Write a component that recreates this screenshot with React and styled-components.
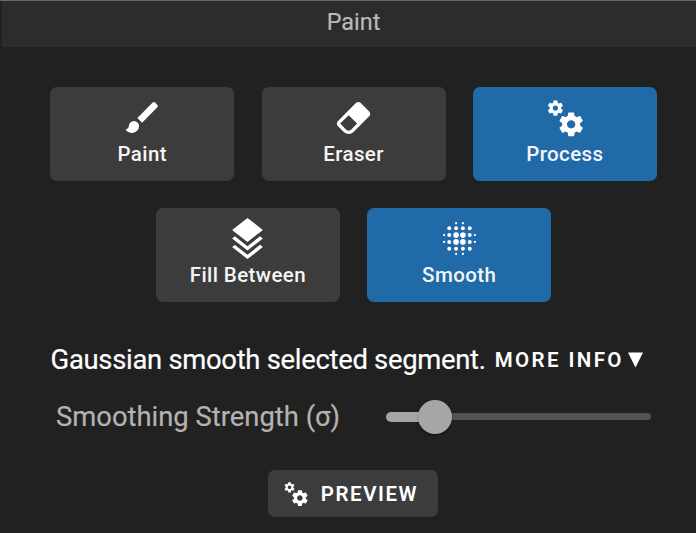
import React from "react";
import styled, { createGlobalStyle } from "styled-components";

const GlobalStyle = createGlobalStyle`
  * { box-sizing: border-box; }
  body { margin: 0; background: #212121; overflow: hidden; }
`;

const Panel = styled.main`
  width: 696px;
  height: 533px;
  background: #212121;
  color: #fff;
  font-family: Roboto, "Liberation Sans", sans-serif;
  border-top: 1px solid #646867;
  display: flex;
  flex-direction: column;
`;

const Header = styled.header`
  height: 46px;
  flex: none;
  margin-left: 2px;
  padding-bottom: 5px;
  background: #2c2c2c;
  color: #b9b9b9;
  font-size: 23.4px;
  -webkit-text-stroke: 0.2px currentColor;
  display: flex;
  align-items: center;
  justify-content: center;
  padding-left: 9px;
`;

const Tools = styled.div`
  display: flex;
  flex-wrap: wrap;
  justify-content: center;
  gap: 27px 27.3px;
  margin: 40.4px 39px 0 50.1px;
`;

const ToolButton = styled.button`
  width: 184px;
  height: 94px;
  flex: none;
  border: 0;
  border-radius: 7px;
  padding: 9.6px 0 0;
  background: ${(p) => (p.$active ? "#216aa8" : "#3c3c3c")};
  color: ${(p) => (p.$active ? "#f3f7fa" : "#f5f5f5")};
  font: 500 20.5px/30px Roboto, "Liberation Sans", sans-serif;
  letter-spacing: 0.4px;
  display: flex;
  flex-direction: column;
  align-items: center;
  gap: 1.4px;
  white-space: nowrap;
`;

const Icon = styled.svg`
  width: ${(p) => p.$size}px;
  height: ${(p) => p.$size}px;
  fill: #fff;
  flex: none;
  display: block;
`;

const Description = styled.div`
  display: flex;
  align-items: center;
  height: 40px;
  margin: 37.2px 0 0 50.5px;
  font-size: 27.4px;
  letter-spacing: -0.28px;
  -webkit-text-stroke: 0.2px currentColor;
  white-space: nowrap;
`;

const MoreInfo = styled.button`
  border: 0;
  padding: 0;
  margin-left: 9px;
  background: none;
  color: #fff;
  font: 600 20.5px/30px Roboto, "Liberation Sans", sans-serif;
  letter-spacing: 2.4px;
  -webkit-text-stroke: 0;
  display: flex;
  align-items: center;
  gap: 4.5px;
`;

const Caret = styled.svg`
  width: 15px;
  height: 16px;
  fill: #fff;
`;

const Strength = styled.label`
  display: flex;
  align-items: center;
  height: 40px;
  margin: 17px 45px 0 56px;
  color: #b3b3b3;
  font-size: 27.4px;
  -webkit-text-stroke: 0.2px currentColor;
  justify-content: space-between;
  white-space: nowrap;
`;

const StrengthText = styled.span`
  padding-top: 1px;
`;

const Slider = styled.div`
  width: 265px;
  height: 34px;
  display: flex;
  align-items: center;
`;

const Filled = styled.div`
  width: 38px;
  height: 10px;
  border-radius: 5px 0 0 5px;
  background: #a6a6a6;
  margin-right: -6px;
`;

const Thumb = styled.div`
  width: 34px;
  height: 34px;
  border-radius: 50%;
  background: #a6a6a6;
  box-shadow: 0 2px 3px rgba(0, 0, 0, 0.3);
  z-index: 1;
`;

const Rest = styled.div`
  flex: 1;
  height: 7px;
  margin-left: -4px;
  border-radius: 0 3.5px 3.5px 0;
  background: #525252;
`;

const Preview = styled.button`
  align-self: center;
  width: 170.6px;
  height: 47px;
  margin: 33.8px 0 0 9.8px;
  border: 0;
  border-radius: 7px;
  padding: 0 0 0 14.6px;
  background: #3c3c3c;
  color: #fff;
  font: 600 20.5px/30px Roboto, "Liberation Sans", sans-serif;
  letter-spacing: 1.55px;
  display: flex;
  align-items: center;
  gap: 11.6px;
`;

const COGS =
  "M15.9,18.45C17.25,18.45 18.35,17.35 18.35,16C18.35,14.65 17.25,13.55 15.9,13.55C14.54,13.55 13.45,14.65 13.45,16C13.45,17.35 14.54,18.45 15.9,18.45M21.1,16.68L22.58,17.84C22.71,17.95 22.75,18.13 22.66,18.29L21.26,20.71C21.17,20.86 21,20.92 20.83,20.86L19.09,20.16C18.73,20.44 18.33,20.67 17.91,20.85L17.64,22.7C17.62,22.87 17.47,23 17.3,23H14.5C14.32,23 14.18,22.87 14.15,22.7L13.89,20.85C13.46,20.67 13.07,20.44 12.71,20.16L10.96,20.86C10.81,20.92 10.62,20.86 10.54,20.71L9.14,18.29C9.05,18.13 9.09,17.95 9.22,17.84L10.7,16.68L10.65,16L10.7,15.31L9.22,14.16C9.09,14.05 9.05,13.86 9.14,13.71L10.54,11.29C10.62,11.13 10.81,11.07 10.96,11.13L12.71,11.84C13.07,11.56 13.46,11.32 13.89,11.15L14.15,9.29C14.18,9.13 14.32,9 14.5,9H17.3C17.47,9 17.62,9.13 17.64,9.29L17.91,11.15C18.33,11.32 18.73,11.56 19.09,11.84L20.83,11.13C21,11.07 21.17,11.13 21.26,11.29L22.66,13.71C22.75,13.86 22.71,14.05 22.58,14.16L21.1,15.31L21.15,16L21.1,16.68M6.69,8.07C7.56,8.07 8.26,7.37 8.26,6.5C8.26,5.63 7.56,4.92 6.69,4.92A1.58,1.58 0 0,0 5.11,6.5C5.11,7.37 5.82,8.07 6.69,8.07M10.03,6.94L11,7.68C11.07,7.75 11.09,7.87 11.03,7.97L10.13,9.53C10.08,9.63 9.96,9.67 9.86,9.63L8.74,9.18L8,9.62L7.81,10.81C7.79,10.92 7.7,11 7.59,11H5.79C5.67,11 5.58,10.92 5.56,10.81L5.4,9.62L4.64,9.18L3.52,9.63C3.41,9.67 3.3,9.63 3.24,9.53L2.34,7.97C2.28,7.87 2.31,7.75 2.39,7.68L3.34,6.94L3.31,6.5L3.34,6.06L2.39,5.32C2.31,5.25 2.28,5.13 2.34,5.03L3.24,3.47C3.3,3.37 3.41,3.33 3.52,3.37L4.63,3.82L5.4,3.38L5.56,2.19C5.58,2.08 5.67,2 5.79,2H7.59C7.7,2 7.79,2.08 7.81,2.19L8,3.38L8.74,3.82L9.86,3.37C9.96,3.33 10.08,3.37 10.13,3.47L11.03,5.03C11.09,5.13 11.07,5.25 11,5.32L10.03,6.06L10.06,6.5L10.03,6.94Z";
const BRUSH =
  "M20.71,4.63L19.37,3.29C19,2.9 18.35,2.9 17.96,3.29L9,12.25L11.75,15L20.71,6.04C21.1,5.65 21.1,5 20.71,4.63M7,14A3,3 0 0,0 4,17C4,18.31 2.84,19 2,19C2.92,20.22 4.5,21 6,21A4,4 0 0,0 10,17A3,3 0 0,0 7,14Z";
const ERASER =
  "M16.24,3.56L21.19,8.5C21.97,9.29 21.97,10.55 21.19,11.34L12,20.53C10.44,22.09 7.91,22.09 6.34,20.53L2.81,17C2.03,16.21 2.03,14.95 2.81,14.16L13.41,3.56C14.2,2.78 15.46,2.78 16.24,3.56M4.22,15.58L7.76,19.11C8.54,19.9 9.8,19.9 10.59,19.11L14.12,15.58L9.17,10.63L4.22,15.58Z";
const LAYERS =
  "M12 0L3 7L4.63 8.27L12 14L19.36 8.27L21 7L12 0M19.37 10.73L12 16.47L4.62 10.74L3 12L12 19L21 12L19.37 10.73M19.37 15.73L12 21.47L4.62 15.74L3 17L12 24L21 17L19.37 15.73Z";

const BLUR_DOTS = [
  [10, 3, 0.5], [14, 3, 0.5],
  [6, 6, 1], [10, 6, 1], [14, 6, 1], [18, 6, 1],
  [3, 10, 0.5], [6, 10, 1], [10, 10, 1.5], [14, 10, 1.5], [18, 10, 1], [21, 10, 0.5],
  [3, 14, 0.5], [6, 14, 1], [10, 14, 1.5], [14, 14, 1.5], [18, 14, 1], [21, 14, 0.5],
  [6, 18, 1], [10, 18, 1], [14, 18, 1], [18, 18, 1],
  [10, 21, 0.5], [14, 21, 0.5],
];

function Glyph({ path, size = 41 }) {
  return (
    <Icon $size={size} viewBox="0 0 24 24" aria-hidden="true">
      {path ? (
        <path d={path} />
      ) : (
        BLUR_DOTS.map(([x, y, r]) => (
          <circle key={`${x}-${y}`} cx={x} cy={y} r={r + 0.15} />
        ))
      )}
    </Icon>
  );
}

const TOOLS = [
  { label: "Paint", path: BRUSH },
  { label: "Eraser", path: ERASER },
  { label: "Process", path: COGS, active: true },
  { label: "Fill Between", path: LAYERS },
  { label: "Smooth", active: true },
];

export default function App() {
  return (
    <>
      <GlobalStyle />
      <Panel>
        <Header>Paint</Header>
        <Tools>
          {TOOLS.map((t) => (
            <ToolButton key={t.label} $active={t.active}>
              <Glyph path={t.path} />
              <span>{t.label}</span>
            </ToolButton>
          ))}
        </Tools>
        <Description>
          <span>Gaussian smooth selected segment.</span>
          <MoreInfo>
            MORE INFO
            <Caret viewBox="0 0 15 16"><path d="M0 0.5H15L7.5 15.5Z" /></Caret>
          </MoreInfo>
        </Description>
        <Strength>
          <StrengthText>Smoothing Strength (σ)</StrengthText>
          <Slider>
            <Filled />
            <Thumb />
            <Rest />
          </Slider>
        </Strength>
        <Preview>
          <Glyph path={COGS} size={27} />
          PREVIEW
        </Preview>
      </Panel>
    </>
  );
}
